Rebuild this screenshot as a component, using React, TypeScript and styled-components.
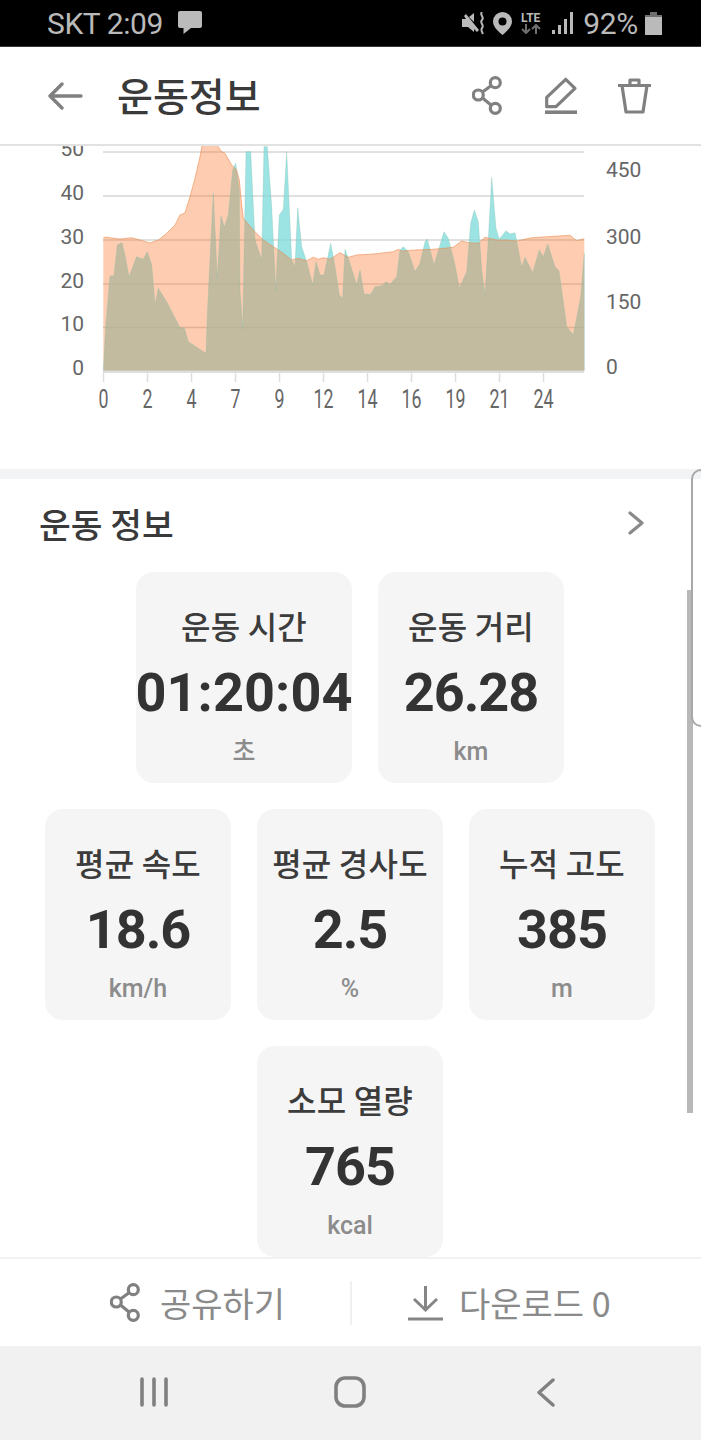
import styled, { createGlobalStyle } from 'styled-components';

const GlobalStyle = createGlobalStyle`
  html, body {
    margin: 0;
    padding: 0;
    width: 701px;
    height: 1440px;
    overflow: hidden;
    background: #ffffff;
    font-family: Roboto, "Noto Sans CJK KR", sans-serif;
  }
`;

const Screen = styled.div`
  position: relative;
  display: flex;
  flex-direction: column;
  width: 701px;
  height: 1440px;
  overflow: hidden;
`;

const StatusBar = styled.div`
  display: flex;
  align-items: center;
  justify-content: space-between;
  box-sizing: border-box;
  height: 47px;
  padding: 0 39px 0 47px;
  background: #000000;
  border-bottom: 1px solid #3a3a3a;
  color: #bababa;
  font-size: 30px;
`;

const StatusGroup = styled.div`
  display: flex;
  align-items: center;
`;

const StatusGap = styled.div`
  width: 7px;
`;

const Carrier = styled.span`
  margin-right: 15px;
  letter-spacing: -0.4px;
`;

const Percent = styled.span`
  margin: 0 7px 0 10px;
  letter-spacing: -0.3px;
`;

const LteBlock = styled.div`
  display: flex;
  flex-direction: column;
  align-items: center;
  width: 23px;
  margin: 0 10px 0 7px;
`;

const LteText = styled.span`
  font-size: 12px;
  line-height: 12px;
  font-weight: 700;
`;

const Header = styled.header`
  display: flex;
  align-items: center;
  box-sizing: border-box;
  height: 99px;
  padding: 0 50px 0 48px;
  background: #ffffff;
  border-bottom: 2px solid #e2e2e2;
`;

const PageTitle = styled.h1`
  flex: 1;
  margin: -3px 0 0 34px;
  color: #3a3a3a;
  font-family: "Noto Sans CJK KR", sans-serif;
  font-size: 39px;
  line-height: 50px;
  font-weight: 500;
`;

const HeaderActions = styled.div`
  display: flex;
  align-items: center;
  gap: 40px;
`;

const ChartPanel = styled.section`
  height: 323px;
  overflow: hidden;
  background: #ffffff;
`;

const ChartSvg = styled.svg`
  display: block;
  font-family: Roboto, sans-serif;
`;

const Band = styled.div`
  height: 10px;
  background: #f2f3f4;
`;

const InfoPanel = styled.section`
  background: #ffffff;
`;

const InfoHead = styled.div`
  display: flex;
  align-items: center;
  justify-content: space-between;
  height: 88px;
  margin-bottom: 5px;
  padding: 0 57px 0 39px;
`;

const InfoTitle = styled.h2`
  margin: 0;
  color: #3a3a3a;
  font-family: "Noto Sans CJK KR", sans-serif;
  font-size: 34.5px;
  line-height: 44px;
  font-weight: 500;
`;

const CardGrid = styled.div`
  display: flex;
  flex-wrap: wrap;
  justify-content: center;
  gap: 26px;
  width: 610px;
  margin-left: 45px;
`;

const Card = styled.div<{ $wide?: boolean }>`
  display: flex;
  flex-direction: column;
  align-items: center;
  box-sizing: border-box;
  width: ${(p) => (p.$wide ? 216 : 186)}px;
  height: 211px;
  padding-top: 33px;
  border-radius: 18px;
  background: #f5f5f5;
`;

const CardLabel = styled.div`
  color: #3c3c3c;
  font-family: "Noto Sans CJK KR", sans-serif;
  font-size: 32px;
  line-height: 40px;
  font-weight: 500;
  white-space: nowrap;
  letter-spacing: 0.2px;
`;

const CardValue = styled.div<{ $wide?: boolean }>`
  margin-top: 18px;
  color: #333333;
  font-family: Roboto, sans-serif;
  font-size: 54px;
  line-height: 60px;
  font-weight: 700;
  white-space: nowrap;
  letter-spacing: ${(p) => (p.$wide ? '0.1px' : '-1px')};
`;

const CardUnit = styled.div`
  margin-top: 9px;
  color: #8c8c8c;
  font-family: Roboto, "Noto Sans CJK KR", sans-serif;
  font-size: 25px;
  line-height: 40px;
  font-weight: 500;
`;

const Footer = styled.div`
  display: flex;
  align-items: center;
  box-sizing: border-box;
  height: 89px;
  border-top: 2px solid #f2f2f2;
  background: #ffffff;
`;

const FooterButton = styled.div<{ $side: 'left' | 'right' }>`
  display: flex;
  flex: ${(p) => (p.$side === 'left' ? '0 0 350px' : '1')};
  box-sizing: border-box;
  align-items: center;
  justify-content: ${(p) => (p.$side === 'left' ? 'flex-end' : 'flex-start')};
  gap: ${(p) => (p.$side === 'left' ? 17 : 16)}px;
  padding: ${(p) => (p.$side === 'left' ? '0 65px 0 0' : '0 0 0 56px')};
  color: #8a8a8a;
  font-family: "Noto Sans CJK KR", sans-serif;
  font-size: 34px;
  line-height: 44px;
`;

const FooterDivider = styled.div`
  width: 2px;
  height: 44px;
  background: #f0f0f0;
`;

const NavBar = styled.nav`
  display: grid;
  grid-template-columns: repeat(3, 196px);
  justify-content: center;
  align-items: center;
  justify-items: center;
  box-sizing: border-box;
  height: 94px;
  padding: 0 2px 2px 0;
  background: #f1f1f1;
`;

const Scrollbar = styled.div`
  position: absolute;
  left: 687px;
  top: 590px;
  width: 6px;
  height: 523px;
  background: #b8b8b8;
`;

const EdgeHandle = styled.div`
  position: absolute;
  left: 691px;
  top: 469px;
  width: 20px;
  height: 258px;
  box-sizing: border-box;
  border: 2px solid #a8a8a8;
  border-radius: 12px;
`;

const gray = '#808080';

// chart points are read off a 3x crop of the plot, so x/3 + 40 and y/3 + 140 give page pixels
const speedLeft: number[][] = [
  [190, 692], [197, 560], [210, 408], [222, 407], [232, 315], [246, 308], [255, 345], [267, 410],
  [290, 350], [310, 358], [322, 335], [335, 375], [345, 495], [355, 445], [380, 485], [420, 563],
  [433, 563], [445, 605], [470, 622], [498, 640], [503, 500], [520, 160], [532, 415], [543, 228],
  [553, 262], [565, 225], [578, 90], [587, 70], [598, 150], [600, 450], [608, 565], [618, 35],
  [632, 35], [645, 300], [665, 360], [672, 20], [682, 20], [695, 200], [707, 452], [718, 225],
  [730, 208], [740, 35], [755, 360], [765, 380], [773, 203], [785, 320], [800, 365], [818, 435],
  [828, 365], [840, 405], [852, 405], [872, 310], [885, 380], [898, 465], [908, 475],
];

const speedRight: number[][] = [
  [15, 328], [25, 355], [50, 435], [60, 390], [72, 462], [92, 463], [105, 440], [125, 437],
  [138, 425], [150, 433], [170, 410], [180, 330], [190, 320], [205, 335], [225, 395], [240, 370],
  [255, 305], [262, 297], [282, 375], [312, 275], [325, 295], [345, 375], [358, 445], [380, 395],
  [392, 250], [403, 210], [415, 245], [425, 390], [435, 465], [445, 300], [455, 112], [468, 265],
  [478, 297], [498, 272], [510, 282], [525, 278], [545, 382], [555, 352], [578, 398], [598, 330],
  [610, 350], [623, 312], [645, 380], [657, 392], [680, 560], [700, 585], [722, 470], [733, 340],
  [733, 692],
];

const altitudeLeft: number[][] = [
  [190, 692], [190, 293], [200, 291], [215, 294], [240, 297], [275, 293], [300, 300], [330, 309],
  [355, 300], [380, 280], [405, 255], [420, 225], [435, 218], [450, 170], [465, 115], [480, 50],
  [487, 14], [530, 14], [545, 35], [555, 40], [575, 75], [590, 90], [598, 120], [605, 195],
  [610, 235], [640, 270], [670, 300], [700, 320], [730, 340], [755, 360], [775, 355], [800, 362],
  [820, 352], [835, 358], [850, 353], [870, 358], [900, 338],
];

const altitudeRight: number[][] = [
  [25, 352], [50, 345], [100, 342], [160, 335], [175, 328], [185, 333], [225, 330], [280, 328],
  [340, 322], [365, 303], [385, 308], [415, 310], [435, 292], [470, 300], [500, 300], [530, 303],
  [575, 293], [690, 286], [710, 302], [733, 296], [733, 692],
];

const toPage = (pts: number[][], shift: number) =>
  pts.map(([x, y]) => `${(40 + (x + shift) / 3).toFixed(1)},${(140 + y / 3).toFixed(1)}`).join(' ');

const speedPoints = `${toPage(speedLeft, 0)} ${toPage(speedRight, 900)}`;
const altitudePoints = `${toPage(altitudeLeft, 0)} ${toPage(altitudeRight, 900)}`;
const altitudeLine = `${toPage(altitudeLeft.slice(1), 0)} ${toPage(altitudeRight.slice(0, -1), 900)}`;

const leftAxis = [
  { label: '50', y: 148 },
  { label: '40', y: 192 },
  { label: '30', y: 236 },
  { label: '20', y: 280 },
  { label: '10', y: 323 },
  { label: '0', y: 367 },
];

const rightAxis = [
  { label: '450', y: 169 },
  { label: '300', y: 236 },
  { label: '150', y: 301 },
  { label: '0', y: 366 },
];

const bottomAxis = [
  { label: '0', x: 103.5 },
  { label: '2', x: 147.5 },
  { label: '4', x: 191.5 },
  { label: '7', x: 235.5 },
  { label: '9', x: 279.5 },
  { label: '12', x: 323.5 },
  { label: '14', x: 367.5 },
  { label: '16', x: 411.5 },
  { label: '19', x: 455.5 },
  { label: '21', x: 499.5 },
  { label: '24', x: 543.5 },
];

const gridLines = [152, 196, 240, 284, 327.5];

const RideChart = () => (
  <ChartSvg width={701} height={323} viewBox="0 146 701 323">
    {gridLines.map((y) => (
      <line key={y} x1={103} x2={584} y1={y} y2={y} stroke="#e2e2e2" strokeWidth={1.5} />
    ))}
    <line x1={103} x2={584} y1={372} y2={372} stroke="#dedede" strokeWidth={2} />
    {bottomAxis.map((t) => (
      <line key={t.label} x1={t.x} x2={t.x} y1={372} y2={382} stroke="#dedede" strokeWidth={1.5} />
    ))}
    <polygon points={speedPoints} fill="#9ce3e4" />
    <polygon points={altitudePoints} fill="rgba(252,128,58,0.4)" />
    {gridLines.map((y) => (
      <line key={y} x1={103} x2={584} y1={y} y2={y} stroke="rgba(120,120,100,0.1)" strokeWidth={1.5} />
    ))}
    <polyline points={altitudeLine} fill="none" stroke="rgba(235,140,80,0.6)" strokeWidth={1} />
    <polyline points={speedPoints} fill="none" stroke="rgba(130,190,170,0.3)" strokeWidth={1} />
    {leftAxis.map((t) => (
      <text key={t.label} x={84} y={t.y + 7.5} textAnchor="end" fontSize={21} fill="#666666">
        {t.label}
      </text>
    ))}
    {rightAxis.map((t) => (
      <text key={t.label} x={606} y={t.y + 7.5} fontSize={21} fill="#666666">
        {t.label}
      </text>
    ))}
    {bottomAxis.map((t) => (
      <text
        key={t.label}
        x={t.x - t.label.length * 5}
        y={408}
        fontSize={25}
        fill="#666666"
        textLength={t.label.length * 10}
        lengthAdjust="spacingAndGlyphs"
      >
        {t.label}
      </text>
    ))}
  </ChartSvg>
);

const BackIcon = () => (
  <svg width={35} height={30} viewBox="0 0 35 30" fill="none" stroke={gray} strokeWidth={3.4} strokeLinecap="round" strokeLinejoin="round">
    <path d="M2 15H33M14 3L2 15L14 27" />
  </svg>
);

const ShareIcon = () => (
  <svg width={33} height={40} viewBox="0 0 33 40" fill="none" stroke={gray} strokeWidth={3.2}>
    <circle cx={23.3} cy={6.7} r={5} />
    <circle cx={6.3} cy={19} r={5} />
    <circle cx={23.3} cy={32.3} r={5} />
    <path d="M10.5 16L19 9.8M10.5 22L19 29" />
  </svg>
);

const PencilIcon = () => (
  <svg width={33} height={40} viewBox="0 0 33 40" fill="none" stroke={gray} strokeWidth={3.2} strokeLinejoin="round">
    <path d="M1.7 30.7V21.3L20.7 3.3L30 12.3L11 30.7Z" />
    <path d="M0 36.2H32" strokeWidth={3.6} />
  </svg>
);

const TrashIcon = () => (
  <svg width={33} height={40} viewBox="0 0 33 40" fill="none" stroke={gray} strokeWidth={3.2} strokeLinejoin="round">
    <path d="M0 9.5H33M12 9V4H21V9M4 9.5L8 36H25L29 9.5" />
  </svg>
);

const ChevronIcon = () => (
  <svg width={16} height={24} viewBox="0 0 16 24" fill="none" stroke="#8a8a8a" strokeWidth={3.2} strokeLinecap="round" strokeLinejoin="round">
    <path d="M2 2L14 12L2 22" />
  </svg>
);

const DownloadIcon = () => (
  <svg width={35} height={36} viewBox="0 0 35 36" fill="none" stroke="#858585" strokeWidth={3}>
    <path d="M17.5 1V24M6 14L17.5 25L29 14" />
    <path d="M0 34H35" />
  </svg>
);

const MenuIcon = () => (
  <svg width={28} height={30} viewBox="0 0 28 30" fill="none" stroke={gray} strokeWidth={3.6} strokeLinecap="round">
    <path d="M2 2V28M14 2V28M26 2V28" />
  </svg>
);

const HomeIcon = () => (
  <svg width={32} height={32} viewBox="0 0 32 32" fill="none" stroke={gray} strokeWidth={3.6}>
    <rect x={2} y={2} width={28} height={28} rx={9} />
  </svg>
);

const NavBackIcon = () => (
  <svg width={18} height={29} viewBox="0 0 18 29" fill="none" stroke={gray} strokeWidth={3.4} strokeLinecap="round" strokeLinejoin="round">
    <path d="M16 2L2 14.5L16 27" />
  </svg>
);

const BubbleIcon = () => (
  <svg width={24} height={24} viewBox="0 0 24 24" fill="#bababa">
    <path d="M2 0H22A2 2 0 0 1 24 2V15A2 2 0 0 1 22 17H13L5.5 23V17H2A2 2 0 0 1 0 15V2A2 2 0 0 1 2 0Z" />
  </svg>
);

const MuteVibrateIcon = () => (
  <svg width={24} height={23} viewBox="0 0 24 23" fill="#bababa">
    <path d="M0 7H4L2 4L4 2L17 18L15 20L12 17V20L6 15H0Z" />
    <path d="M7 5L12 1V10Z" />
    <path d="M20 0C17 3 23 5 20 8C17 11 23 13 20 16C18.500 18 20 20 21 22" fill="none" stroke="#bababa" strokeWidth={2} />
  </svg>
);

const PinIcon = () => (
  <svg width={19} height={23} viewBox="0 0 19 23">
    <path d="M9.5 0A9.500 9.500 0 0 1 19 9.500C19 15 13 20 9.500 23C6 20 0 15 0 9.500A9.500 9.500 0 0 1 9.500 0Z" fill="#bababa" />
    <circle cx={9.5} cy={9.5} r={4} fill="#000000" />
  </svg>
);

const LteArrows = () => (
  <svg width={20} height={10} viewBox="0 0 20 10" fill="none" stroke="#6f6f6f" strokeWidth={2}>
    <path d="M5 0V9M1 5L5 9L9 5M15 10V1M11 5L15 1L19 5" />
  </svg>
);

const SignalIcon = () => (
  <svg width={21} height={22} viewBox="0 0 21 22" fill="#bababa">
    <rect x={0} y={18} width={3} height={4} />
    <rect x={6} y={13} width={3} height={9} />
    <rect x={12} y={7} width={3} height={15} />
    <rect x={18} y={0} width={3} height={22} />
  </svg>
);

const BatteryIcon = () => (
  <svg width={17} height={23} viewBox="0 0 17 23">
    <path d="M5 0H12V3H5Z" fill="#6f6f6f" />
    <path d="M0 3H17V5H0Z" fill="#6f6f6f" />
    <rect x={0} y={5} width={17} height={18} fill="#bababa" />
  </svg>
);

const stats = [
  { label: '운동 시간', value: '01:20:04', unit: '초', wide: true },
  { label: '운동 거리', value: '26.28', unit: 'km' },
  { label: '평균 속도', value: '18.6', unit: 'km/h' },
  { label: '평균 경사도', value: '2.5', unit: '%' },
  { label: '누적 고도', value: '385', unit: 'm' },
  { label: '소모 열량', value: '765', unit: 'kcal' },
];

const App = () => (
  <Screen>
    <GlobalStyle />
    <StatusBar>
      <StatusGroup>
        <Carrier>SKT 2:09</Carrier>
        <BubbleIcon />
      </StatusGroup>
      <StatusGroup>
        <MuteVibrateIcon />
        <StatusGap />
        <PinIcon />
        <LteBlock>
          <LteText>LTE</LteText>
          <LteArrows />
        </LteBlock>
        <SignalIcon />
        <Percent>92%</Percent>
        <BatteryIcon />
      </StatusGroup>
    </StatusBar>
    <Header>
      <BackIcon />
      <PageTitle>운동정보</PageTitle>
      <HeaderActions>
        <ShareIcon />
        <PencilIcon />
        <TrashIcon />
      </HeaderActions>
    </Header>
    <ChartPanel>
      <RideChart />
    </ChartPanel>
    <Band />
    <InfoPanel>
      <InfoHead>
        <InfoTitle>운동 정보</InfoTitle>
        <ChevronIcon />
      </InfoHead>
      <CardGrid>
        {stats.map((s) => (
          <Card key={s.label} $wide={s.wide}>
            <CardLabel>{s.label}</CardLabel>
            <CardValue $wide={s.wide}>{s.value}</CardValue>
            <CardUnit>{s.unit}</CardUnit>
          </Card>
        ))}
      </CardGrid>
    </InfoPanel>
    <Footer>
      <FooterButton $side="left">
        <ShareIcon />
        <span>공유하기</span>
      </FooterButton>
      <FooterDivider />
      <FooterButton $side="right">
        <DownloadIcon />
        <span>다운로드 0</span>
      </FooterButton>
    </Footer>
    <NavBar>
      <MenuIcon />
      <HomeIcon />
      <NavBackIcon />
    </NavBar>
    <Scrollbar />
    <EdgeHandle />
  </Screen>
);

export default App;
